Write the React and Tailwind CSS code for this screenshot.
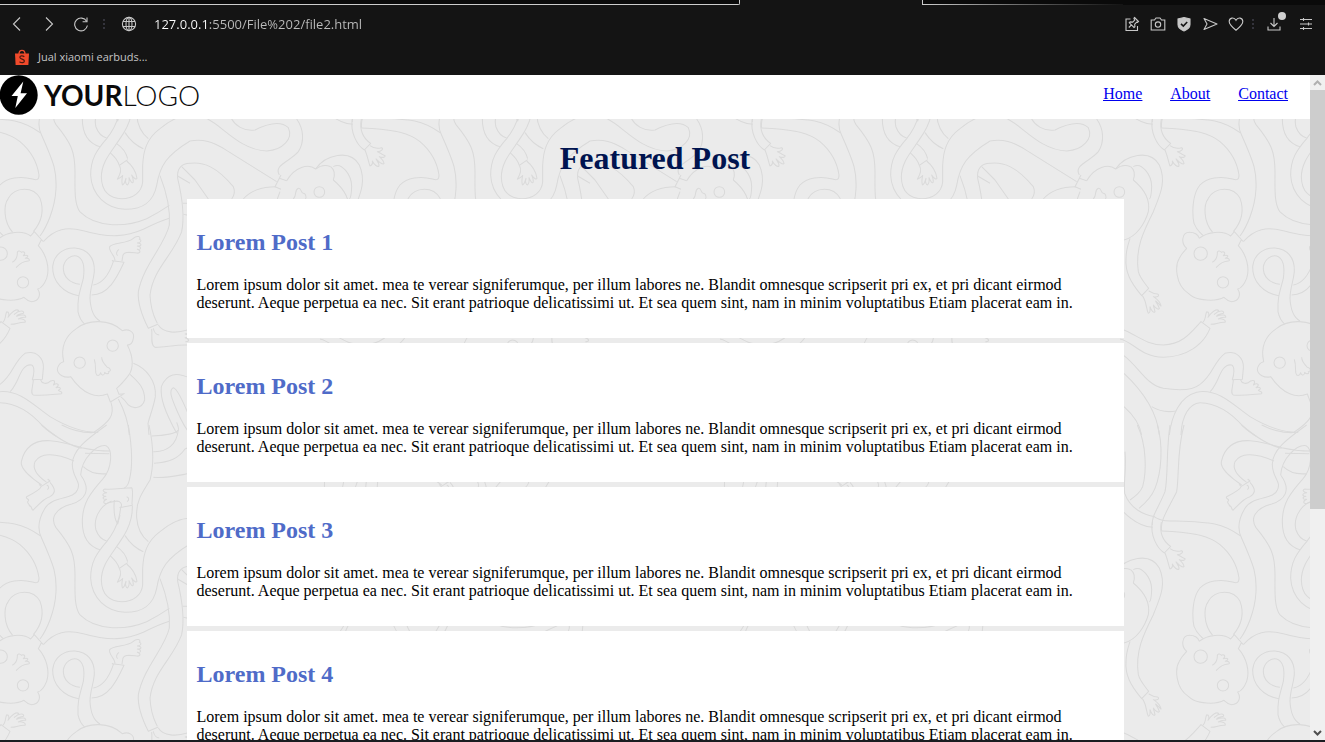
import React from "react";

const posts = ["Lorem Post 1", "Lorem Post 2", "Lorem Post 3", "Lorem Post 4"];

const body =
  "Lorem ipsum dolor sit amet. mea te verear signiferumque, per illum labores ne. Blandit omnesque scripserit pri ex, et pri dicant eirmod deserunt. Aeque perpetua ea nec. Sit erant patrioque delicatissimi ut. Et sea quem sint, nam in minim voluptatibus Etiam placerat eam in.";

/* Line-art groups of the repeating background, in thirds of a pixel. */
const doodles = [
  {
    x: 0,
    y: 0,
    d: [
      "M38,352 C10,320 10,270 25,250 C45,215 100,213 120,250 C133,285 125,320 100,350",
      "M130,380 C165,340 200,335 250,347 C330,370 380,365 430,343 C460,328 480,318 508,310",
      "M237,542 C190,535 157,500 158,455 C162,415 195,397 225,399 C260,402 285,425 283,470 C280,500 270,520 270,550 C272,590 285,610 300,618",
      "M240,508 C210,505 188,485 190,455 C195,430 215,420 230,423 C250,430 255,455 250,490 C240,530 232,545 234,590 C238,610 245,620 255,628",
      "M280,510 C310,505 330,470 340,440 L337,437 L372,442 C350,490 325,540 275,540",
      "M345,437 C345,420 325,410 329,395 C340,380 380,388 400,370 C410,360 425,365 418,373 C428,375 420,385 412,384 C428,385 425,395 412,393 C428,397 422,405 412,403 C425,408 420,416 410,414 C390,412 370,408 368,425 L366,438",
      "M357,403 C348,410 348,418 353,422",
      "M230,640 C265,612 330,612 367,647 C385,640 405,650 400,670 C398,683 392,690 382,690 C400,725 402,760 385,782 C375,795 362,810 350,820 L357,838 L373,836 L331,861 L322,837 C290,850 250,840 212,785 C195,790 172,780 172,762 C175,748 182,742 191,740 C180,690 200,660 230,640",
      "M321,692 a17,17 0 1,0 34,0 a17,17 0 1,0 -34,0",
      "M222,743 a17,17 0 1,0 34,0 a17,17 0 1,0 -34,0",
      "M283,733 C290,755 283,770 290,780 C296,783 300,780 302,773 C305,785 315,780 314,772 C320,780 330,775 325,770 C335,768 332,760 322,757 C310,745 305,735 305,727",
      "M333,862 C345,900 330,920 280,953",
      "M355,852 C370,880 385,920 388,960",
      "M400,745 C440,760 470,800 466,845 C460,880 450,900 444,925 L447,960",
      "M390,778 C415,800 435,820 434,855 C425,885 395,880 385,870 C375,855 368,850 362,845",
      "M480,182 C495,220 512,270 508,330 C495,390 430,450 415,530 C412,570 430,610 445,640 L475,627",
      "M570,145 C545,145 530,160 533,190 C545,240 555,300 545,350 C520,420 460,460 450,540 C452,590 465,610 472,625",
      "M533,183 L570,205 M548,265 L570,265 M550,298 L570,302",
      "M455,642 C458,665 450,690 465,697 C490,698 530,688 562,690 M475,630 C490,655 530,655 562,645",
      "M460,640 C462,652 470,660 478,660",
      "M562,645 C572,650 565,656 555,657 C570,660 570,668 555,668 C570,672 568,680 556,680",
      "M0,808 C40,780 40,740 75,715 C110,705 132,730 130,760 L127,793 L97,794 C102,780 105,755 95,750 C70,745 60,780 50,800 C42,815 36,825 30,830",
      "M100,795 C98,820 90,835 100,840 C130,843 160,838 185,836 C188,828 175,830 175,826 C188,820 178,815 168,818 C182,808 172,803 160,810 C170,795 158,795 152,798 C140,810 125,805 122,795",
      "M0,830 C60,825 100,870 150,905 C200,935 250,953 295,952",
      "M0,863 C60,865 100,900 130,935 C145,950 155,955 170,965",
      "M530,955 C495,890 480,850 484,815 C500,775 530,770 570,790",
      "M570,910 C550,860 530,820 520,818 C505,825 515,850 530,885 C545,920 555,940 570,955",
      "M358,150 C365,165 362,175 352,193 C360,190 365,185 368,182 C365,195 365,205 368,210 C375,207 375,195 378,190 C375,200 378,210 382,210 C388,205 388,195 387,188 C392,200 396,205 399,203 C402,195 397,185 395,180 C402,190 408,195 411,190 C408,170 395,150 380,138",
    ],
  },
  {
    x: 0,
    y: 930,
    d: [
      "M242,150 C275,195 255,225 215,237 C165,250 150,280 168,308 C215,365 225,390 225,450 C225,500 222,545 240,570 C290,620 380,615 440,590 C470,575 490,562 508,550",
      "M320,0 C280,30 215,70 217,120 C218,160 245,170 232,195 C222,225 160,210 135,250 C110,290 115,320 125,340 C165,430 170,450 168,500 C165,560 140,615 120,642",
      "M242,150 C245,100 290,58 318,62 C340,75 335,130 310,160 C270,205 247,235 247,290 C247,340 270,365 300,374",
      "M125,180 C95,160 60,130 64,110 C75,60 110,45 150,47 C190,50 220,60 245,68 C280,76 310,78 330,78",
      "M140,172 C115,155 95,135 105,110 C120,85 160,80 222,108",
      "M250,125 C270,145 300,148 320,146 M255,85 L328,86",
      "M117,178 L124,184 L150,168 L143,162",
      "M124,184 C120,195 90,210 80,215 C75,222 90,222 85,228 C78,235 90,235 88,243 C95,240 95,258 100,255 C115,240 130,220 150,215 C165,205 170,195 150,172",
      "M140,180 C148,183 147,190 142,194",
      "M125,0 C160,30 200,60 245,70 M185,0 C220,18 260,25 290,22",
      "M385,0 C395,60 400,120 388,165 C385,180 378,187 372,190",
      "M447,0 C460,60 462,120 450,165 C430,200 412,220 410,260 C408,300 420,330 445,350",
      "M455,33 C495,32 530,25 535,15 C537,10 533,0 530,-8",
      "M460,80 C500,82 530,60 535,15",
      "M462,115 C510,112 535,100 555,72 L570,65",
      "M460,157 C500,160 530,152 570,145",
      "M358,248 L397,241 L396,236 C397,215 400,195 395,188 C370,188 340,195 315,192 C305,195 310,202 320,203 C305,205 305,214 318,214 C306,216 306,224 320,223 C308,228 308,237 322,235 C340,230 350,225 358,230 C366,235 366,243 362,247",
      "M380,215 C388,218 388,225 381,230",
      "M362,248 C358,290 340,325 320,350 C290,385 272,410 272,460 C275,520 320,560 375,562 C430,562 460,540 470,490 C480,430 500,400 570,357",
      "M397,243 C398,280 385,315 360,350 C330,395 305,420 304,465 C305,510 330,530 365,530 C400,530 425,510 428,480 L428,430 C430,385 440,350 480,320 C510,295 540,280 570,280 C590,280 610,284 623,291",
      "M343,225 C340,260 345,285 353,297 L360,270",
      "M335,228 C295,245 280,285 288,315 C295,335 310,345 320,348",
      "M350,365 C365,375 378,390 383,410",
      "M330,392 C345,405 355,420 358,430 L383,413",
      "M375,332 C390,355 410,372 430,380",
    ],
  },
  {
    x: -240,
    y: 0,
    d: [
      "M135,8 C270,13 300,10 362,54",
      "M125,39 C200,42 260,48 300,80 C335,110 352,145 357,180 C357,195 350,196 338,192 C300,182 260,188 240,210 C218,235 215,290 222,325 C230,345 238,352 250,362",
      "M238,370 C260,350 310,345 332,363 L343,350 L368,378 L364,374 L355,392 C380,420 390,460 380,490 C372,510 362,520 353,522 C365,540 355,560 335,560 C322,558 315,550 312,547 C290,560 230,560 205,535 C165,510 165,450 178,430 C185,415 193,408 200,400 C182,385 185,352 208,352 C225,352 235,362 238,370",
      "M222,416 a20,20 0 1,0 40,0 a20,20 0 1,0 -40,0",
      "M292,502 a17,17 0 1,0 34,0 a17,17 0 1,0 -34,0",
      "M277,442 C290,435 292,425 292,415 C290,408 300,405 304,412 C310,408 320,412 310,422 C325,418 328,425 316,430 C330,428 330,438 325,438 C310,438 300,445 288,458",
      "M148,960 C155,900 180,845 230,832 L240,830 M183,960 C185,900 210,865 240,863",
      "M12,722 C60,760 80,810 130,820 C180,828 220,825 240,808",
      "M95,875 C120,890 145,892 168,888",
      "M12,775 C60,820 110,880 118,960",
      "M12,875 C40,900 60,930 65,960",
      "M0,672 C40,680 60,725 130,727 C200,725 250,690 270,640 L243,620 C215,650 190,688 130,690 C80,690 50,660 12,645",
      "M248,622 C258,615 255,600 260,590 C268,590 268,600 264,607 C275,590 290,580 296,587 C295,592 285,595 283,598 C300,583 315,588 310,595 C300,597 290,602 290,604 C305,597 320,600 317,607 C305,605 298,610 295,612 C305,610 320,615 315,622 C300,620 290,628 272,628",
      "M97,12 C90,50 110,90 133,105 L152,85 C130,70 118,45 124,12",
      "M135,105 C145,130 145,140 150,153 C158,150 158,143 157,138 C163,150 172,157 177,153 C178,145 172,138 168,132 C178,142 188,150 192,146 C192,138 183,130 178,125 C190,130 197,125 195,122 C185,118 178,112 172,110 C185,110 192,100 185,98 C170,102 160,100 150,92",
      "M-13,162 C15,120 90,100 118,150 C140,200 120,240 100,290 C70,350 45,400 55,470 C60,490 75,505 86,520 L65,542 C30,500 15,470 18,430 C18,400 28,380 30,370",
      "M32,155 C45,165 45,180 40,195 C70,220 92,250 85,290 C75,325 50,365 12,375",
      "M40,155 C65,140 95,180 95,215 C94,240 92,250 88,252",
      "M67,542 C80,560 78,580 85,595 C92,595 90,580 90,575 C95,590 102,595 105,590 C103,580 100,573 100,570 C108,582 117,585 118,580 C115,570 108,562 107,558 C115,565 125,577 123,572 C120,560 108,550 100,545 C115,548 120,540 112,537 C100,537 95,532 86,527",
    ],
  },
  {
    x: -240,
    y: 930,
    d: [
      "M150,0 C138,80 145,150 135,200 C115,250 95,270 97,300",
      "M192,0 C170,80 178,150 170,200 C145,250 118,290 125,318",
      "M112,0 C130,60 125,140 105,190 C95,215 75,235 57,250",
      "M52,0 C80,60 80,140 68,185 C60,205 45,215 30,225",
      "M15,80 C20,130 10,170 14,205 C30,250 70,270 105,275",
      "M135,287 C118,285 108,279 103,275",
      "M12,262 C40,290 70,305 98,307",
    ],
  },
  {
    x: 540,
    y: 0,
    d: [
      "M83,12 C130,35 180,105 260,108 C310,105 340,70 325,38 C300,15 255,30 225,45 C190,50 165,30 155,12",
      "M350,12 C370,40 375,80 355,110 C330,140 280,150 298,180",
      "M30,78 C70,70 100,83 130,100 L290,200",
      "M30,145 C70,140 110,155 160,215 C168,235 160,245 155,252",
      "M5,155 L45,195 L85,252",
      "M190,252 C215,222 250,215 288,215",
      "M303,180 L285,215 L303,223 M298,190 L320,197",
      "M292,252 L300,230 M320,197 C345,155 385,145 407,162 C425,148 440,150 452,155",
      "M402,231 a16,16 0 1,0 32,0 a16,16 0 1,0 -32,0",
      "M340,252 C352,240 342,225 355,220 C365,218 362,235 370,235 C378,235 380,250 376,252",
    ],
  },
];

function DoodleBackground() {
  return (
    <svg className="absolute inset-0 h-full w-full" aria-hidden="true">
      <defs>
        <g id="doodle" transform="scale(0.33333)" fill="none" stroke="#dadada" strokeWidth="3.2" strokeLinejoin="round">
          {doodles.map((g, i) => (
            <g key={i} transform={`translate(${g.x} ${g.y})`}>
              {g.d.map((d, j) => (
                <path key={j} d={d} />
              ))}
            </g>
          ))}
        </g>
        <pattern id="doodles" width="400" height="403" y="40" patternUnits="userSpaceOnUse">
          {[-400, 0, 400].map((x) =>
            [-403, 0].map((y) => <use key={`${x}${y}`} href="#doodle" x={x} y={y} />)
          )}
        </pattern>
      </defs>
      <rect width="100%" height="100%" fill="url(#doodles)" />
    </svg>
  );
}

function Icon({ children, size = 16 }) {
  return (
    <svg width={size} height={size} viewBox="0 0 16 16" fill="none" stroke="#c8c8c8" strokeWidth="1.1" aria-hidden="true">
      {children}
    </svg>
  );
}

function ToolButton({ label, children }) {
  return (
    <button type="button" aria-label={label} className="flex h-4 w-4 shrink-0 items-center justify-center">
      {children}
    </button>
  );
}

function Dots() {
  return (
    <svg width="2" height="10" viewBox="0 0 2 10" fill="#34343c" aria-hidden="true">
      <path d="M0 0h2v2H0zM0 4h2v2H0zM0 8h2v2H0z" />
    </svg>
  );
}

function BrowserChrome() {
  return (
    <div className="shrink-0 bg-[#141414]">
      <div className="flex h-[5px]">
        <div className="w-[740px] shrink-0 rounded-br-xs border-r border-b border-[#cccccc] bg-[#0a0a0a]" />
        <div className="w-[182px] shrink-0" />
        <div className="flex grow flex-col border-l border-[#cccccc] bg-[#0a0a0a]">
          <div className="mt-auto h-px w-[200px] bg-linear-to-r from-[#cccccc] to-[#141414]" />
        </div>
      </div>
      <div className="flex h-[38px] items-center pr-[11px] pl-[9px]">
        <div className="flex items-center gap-4">
          <ToolButton label="Back">
            <Icon><path d="M11 1.5 4.500 8 11 14.500" /></Icon>
          </ToolButton>
          <ToolButton label="Forward">
            <Icon><path d="M5 1.500 11.500 8 5 14.500" /></Icon>
          </ToolButton>
          <ToolButton label="Reload">
            <Icon>
              <path d="M13.600 5.200A6.400 6.400 0 1 0 14.400 9.500" />
              <path d="M14 1.500v4.300H9.600" />
            </Icon>
          </ToolButton>
        </div>
        <div className="ml-[14px] flex items-center gap-4">
          <Dots />
          <ToolButton label="Site information">
            <Icon>
              <circle cx="8" cy="8" r="6.600" />
              <ellipse cx="8" cy="8" rx="3" ry="6.600" />
              <path d="M8 1.400v13.200M2 5.500h12M2 10.500h12" />
            </Icon>
          </ToolButton>
        </div>
        <input
          type="text"
          aria-label="Address"
          defaultValue="127.0.0.1:5500/File%202/file2.html"
          className="ml-[17px] min-w-0 grow bg-linear-to-r from-white from-[55px] to-[#bdbdbd] to-[55px] bg-clip-text font-['Open_Sans','Noto_Sans',sans-serif] text-[13px] leading-5 text-transparent outline-none"
        />
        <div className="flex items-center gap-[10px]">
          <ToolButton label="Pin">
            <Icon>
              <path d="M6.500 3H2v11.500h11.500V10" />
              <path d="m10.500 1.500 4 4-1 .8-.8-.2-2 2 .2 2.600-.9.800L5.300 6.800l.8-.9 2.600.2 2-2-.8-1.700zM7.500 8.800 4.800 11.500" />
            </Icon>
          </ToolButton>
          <ToolButton label="Snapshot">
            <Icon>
              <path d="M1.200 4h3.300L6 2h4l1.500 2h3.300v10H1.200z" />
              <circle cx="8" cy="8.600" r="2.700" />
            </Icon>
          </ToolButton>
          <ToolButton label="Shield">
            <Icon>
              <path d="M8 1.500 14 3v5.500c0 3-3 5.300-6 6.500-3-1.200-6-3.500-6-6.500V3z" fill="#c8c8c8" />
              <path d="m5 7.800 2.300 2.200L11.200 6" stroke="#141414" strokeWidth="1.600" />
            </Icon>
          </ToolButton>
          <ToolButton label="Send">
            <Icon><path d="M2 2.500 15 8 2 13.500 5 8z" strokeLinejoin="round" /></Icon>
          </ToolButton>
          <ToolButton label="Favourite">
            <Icon>
              <path d="M8 14.300C3.500 10.700 1.200 8.500 1.200 5.600 1.200 1.600 6 .8 8 4.300c2-3.500 6.800-2.700 6.800 1.300 0 2.900-2.300 5.100-6.800 8.700z" />
            </Icon>
          </ToolButton>
        </div>
        <div className="ml-2 flex items-center gap-3">
          <Dots />
          <div className="relative">
            <ToolButton label="Downloads">
              <Icon><path d="M8 2v8.500M4.500 7 8 10.500 11.500 7M2 10.500V14h12v-3.500" /></Icon>
            </ToolButton>
            <span className="absolute -top-1 -right-1 h-2 w-2 rounded-full bg-[#cfcfcf]" />
          </div>
        </div>
        <div className="ml-4">
          <ToolButton label="Easy setup">
            <Icon><path d="M2 3.500h12M2 8h12M2 12.500h12M5.500 2v3M10.500 6.500v3M5.500 11v3" /></Icon>
          </ToolButton>
        </div>
      </div>
      <div className="flex h-8 items-start px-[14px] pt-[5px]">
        <a href="#bookmark" className="flex items-center gap-2 font-['Open_Sans','Noto_Sans',sans-serif] text-[11px] leading-[18px] text-[#c4c4c4]">
          <svg width="16" height="17" viewBox="0 0 16 17" aria-hidden="true">
            <path d="M5 5C5 .2 11 .2 11 5" fill="none" stroke="#ee4d2d" strokeWidth="1.300" />
            <path d="M1 4.500h14l-.6 11.500H1.600z" fill="#f04a2b" />
            <path d="M10.300 7.800C8.500 6.200 5.700 6.800 5.900 8.500c.2 1.900 4.500 1.400 4.500 3.500 0 1.900-3 2.300-4.900.7" fill="none" stroke="#4c1a10" strokeWidth="1.200" />
          </svg>
          Jual xiaomi earbuds...
        </a>
      </div>
    </div>
  );
}

function Logo() {
  return (
    <a href="#top" aria-label="Your logo" className="flex h-10 items-center text-[#0a0a0a]">
      <svg width="38" height="40" viewBox="0 0 38 40" aria-hidden="true">
        <ellipse cx="18.700" cy="20" rx="19" ry="19.800" fill="#000" />
        <path d="M23.300 6.500 11.500 21h6.300L15.300 33 27 18.200h-6.400z" fill="#fff" />
      </svg>
      <span className="ml-[6px] font-[Lato,sans-serif] text-[28px] leading-10 font-bold">YOUR</span>
      <span className="font-[Lato,sans-serif] text-[28px] leading-10 font-light">LOGO</span>
    </a>
  );
}

function Scrollbar() {
  return (
    <div className="flex w-[15px] shrink-0 flex-col bg-[#f0f0f0]" aria-hidden="true">
      <div className="flex h-[15px] shrink-0 items-center justify-center">
        <svg width="9" height="6" viewBox="0 0 9 6" fill="none" stroke="#b0b0b0" strokeWidth="2">
          <path d="M1 5 4.500 1.500 8 5" />
        </svg>
      </div>
      <div className="grow-66 basis-0 bg-[#cdcdcd]" />
      <div className="grow-34 basis-0" />
      <div className="flex h-[15px] shrink-0 items-center justify-center">
        <svg width="9" height="6" viewBox="0 0 9 6" fill="none" stroke="#505050" strokeWidth="2">
          <path d="M1 1 4.500 4.500 8 1" />
        </svg>
      </div>
    </div>
  );
}

export default function App() {
  return (
    <div className="flex h-screen flex-col overflow-hidden">
      <BrowserChrome />
      <div className="flex min-h-0 grow">
        <div className="relative grow overflow-hidden bg-[#ebebeb] font-['Liberation_Serif',serif] text-base leading-[18px] text-black">
          <DoodleBackground />
          <div className="relative">
            <header className="flex h-11 items-start justify-between bg-white">
              <Logo />
              <nav className="flex gap-7 pt-[10px] pr-[22px] text-[#0000ee] underline">
                <a href="#home">Home</a>
                <a href="#about">About</a>
                <a href="#contact">Contact</a>
              </nav>
            </header>
            <main>
              <h1 className="pt-5 pb-[22px] text-center text-[32px] leading-[38px] font-bold text-[#001450]">Featured Post</h1>
              <div className="mx-auto flex w-[calc(70%+20px)] flex-col gap-[5px]">
                {posts.map((title) => (
                  <article key={title} className="bg-white px-[10px] pt-[29px] pb-[26px]">
                    <h2 className="text-2xl leading-7 font-bold text-[#4f6bc8]">{title}</h2>
                    <p className="pt-5">{body}</p>
                  </article>
                ))}
              </div>
            </main>
          </div>
        </div>
        <Scrollbar />
      </div>
      <div className="h-[2px] shrink-0 bg-[#1a1c20]" />
    </div>
  );
}
